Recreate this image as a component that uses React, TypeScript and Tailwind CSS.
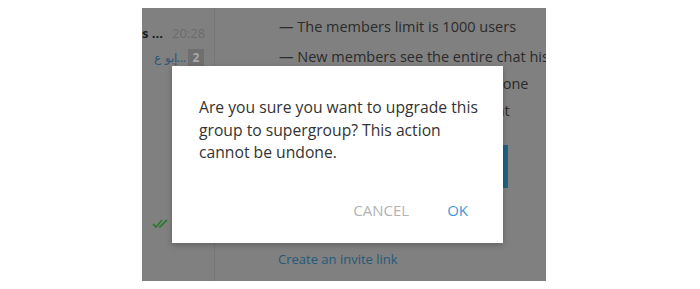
import React from "react";

const font = { fontFamily: '"Open Sans", "Noto Sans", sans-serif' };

const ChatList = () => {
  return (
    <div className="w-[73px] shrink-0 border-r border-[#767676] flex flex-col">
      <div className="flex items-center h-[17px] mt-[17px] text-[13px] leading-none whitespace-nowrap overflow-hidden">
        <span className="font-bold text-[#1c1c1c]">s ...</span>
        <span className="ml-[9px] text-[#6c6c6c] text-[13px]">20:28</span>
      </div>
      <div className="flex items-center mt-[7px] h-[17px] text-[12px] whitespace-nowrap">
        <span className="w-[44px] overflow-hidden text-[#2b5777] text-right" dir="rtl">
          ...إبو ع
        </span>
        <span className="ml-[2px] w-[16px] h-[17px] bg-[#6f6f6f] text-[#a9a9a9] text-[12px] font-bold flex items-center justify-center">
          2
        </span>
      </div>
      <div className="mt-[152px] ml-[10px]">
        <svg width="19" height="11" viewBox="0 0 19 11" fill="none">
          <path d="M1 6 L4 9 L10 2" stroke="#2d7a30" strokeWidth="1.8" />
          <path d="M7 8.5 L8 9 L15 2" stroke="#2d7a30" strokeWidth="1.8" />
        </svg>
      </div>
    </div>
  );
};

const Info = () => {
  return (
    <div className="flex-1 relative overflow-hidden text-[14.5px] text-[#2b2b2b] whitespace-nowrap">
      <div className="pl-[64px] pt-[9px] flex flex-col leading-[19px]">
        <div>— The members limit is 1000 users</div>
        <div className="mt-[11px]">— New members see the entire chat history</div>
        <div className="mt-[8px]">— Messages are erased for everyone</div>
        <div className="mt-[8px]">— Admins can pin all posts in chat</div>
      </div>
      <div className="ml-[37px] mt-[25px] w-[256px] h-[43px] bg-[#1d6383]" />
      <div className="pl-[63px] mt-[62px] text-[13px] text-[#245a7a]">Create an invite link</div>
    </div>
  );
};

const Dialog = () => {
  return (
    <div className="absolute left-[30px] top-[58px] w-[331px] h-[177px] bg-white shadow-[0_2px_6px_rgba(0,0,0,0.25)] flex flex-col">
      <p className="pl-[27px] pr-[24px] pt-[30px] text-[15.7px] leading-[22.5px] text-[#333333]">
        Are you sure you want to upgrade this group to supergroup? This action cannot be undone.
      </p>
      <div className="mt-auto mb-[25px] flex justify-end items-center gap-[38px] pr-[35px] text-[15px] leading-none">
        <span className="text-[#b3b3b3]">CANCEL</span>
        <span className="text-[#3e9ad6]">OK</span>
      </div>
    </div>
  );
};

export default function App() {
  return (
    <div className="w-[700px] h-[289px] bg-white pt-[8px] pl-[142px]" style={font}>
      <div className="relative w-[404px] h-[273px] bg-[#808080] flex">
        <ChatList />
        <Info />
        <Dialog />
      </div>
    </div>
  );
}
